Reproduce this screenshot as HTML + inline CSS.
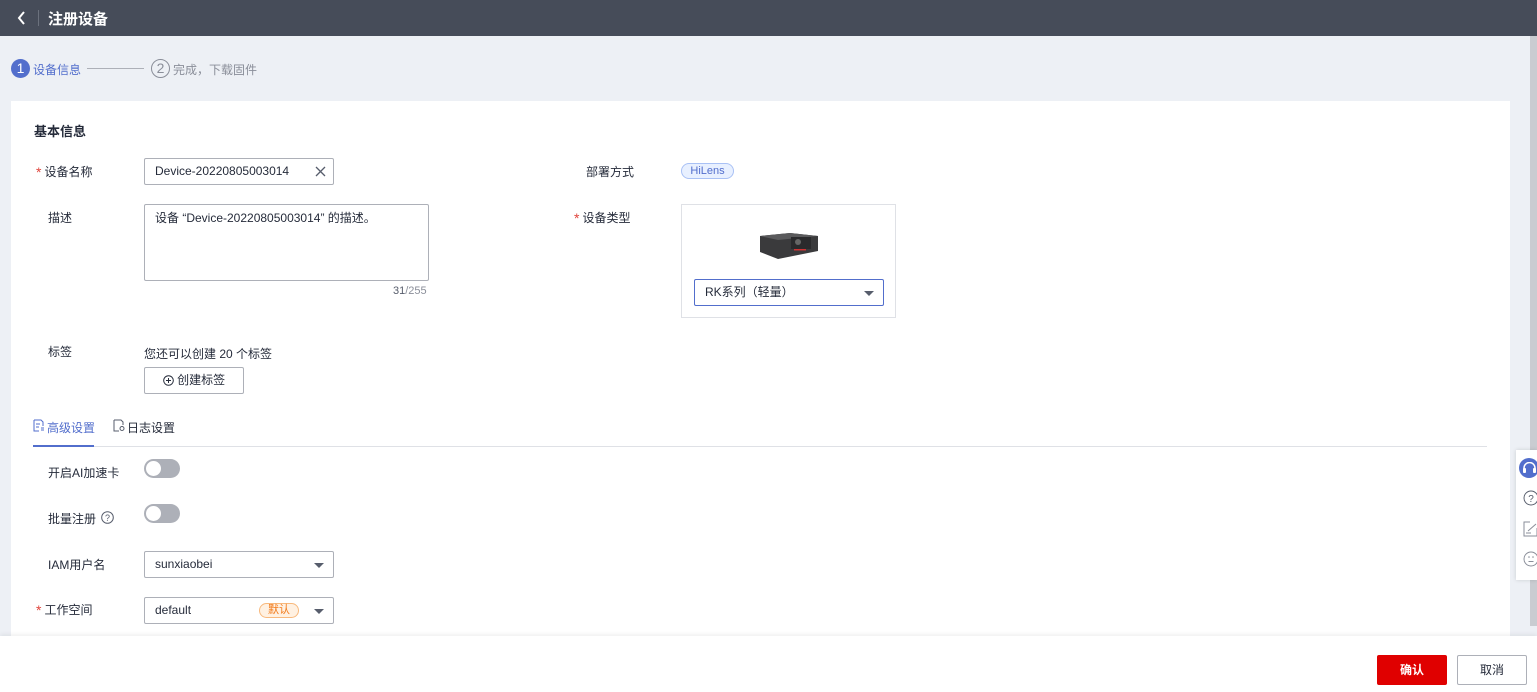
<!DOCTYPE html>
<html><head><meta charset="utf-8"><style>
*{box-sizing:border-box;margin:0;padding:0}
body{width:1537px;height:692px;overflow:hidden;background:#edf0f5;font-family:"Liberation Sans","Noto Sans CJK SC",sans-serif;font-size:12px;color:#252b3a;position:relative}
.abs{position:absolute}
.hdr{left:0;top:0;width:1537px;height:36px;background:#464c59;color:#fff}
.card{left:11px;top:101px;width:1499px;height:560px;background:#fff}
.lbl{font-size:12px;color:#252b3a}
.star{color:#e0443c;margin-right:3px;font-size:14px;vertical-align:-1px}
.inp{border:1px solid #adb0b8;border-radius:2px;background:#fff;height:27px;padding-left:10px;line-height:25px;color:#252b3a}
.tri{position:absolute;right:9px;top:11px;border-left:5px solid transparent;border-right:5px solid transparent;border-top:5px solid #575d6c}
.tog{width:36px;height:19px;border-radius:10px;background:#adb0b8}
.tog::after{content:"";position:absolute;left:2px;top:2px;width:15px;height:15px;border-radius:50%;background:#fff}
.foot{left:0;top:636px;width:1537px;height:56px;background:#fff;box-shadow:0 -2px 4px rgba(0,0,0,.06)}
</style></head><body>
<div class="abs hdr">
  <svg class="abs" style="left:17px;top:11px" width="10" height="14" viewBox="0 0 10 14"><path d="M7 1L2 7l5 6" fill="none" stroke="#fff" stroke-width="2"/></svg>
  <div class="abs" style="left:38px;top:10px;width:1px;height:16px;background:#6b717d"></div>
  <div class="abs" style="left:48px;top:8px;font-size:15px;font-weight:bold">注册设备</div>
</div>
<div class="abs" style="left:1530px;top:36px;width:7px;height:590px;background:#c9ccd1"></div>
<div class="abs" style="left:11px;top:59px;width:19px;height:19px;border-radius:50%;background:#526ecc;color:#fff;text-align:center;line-height:19px;font-size:14px">1</div>
<div class="abs" style="left:33px;top:61px;color:#526ecc">设备信息</div>
<div class="abs" style="left:87px;top:68px;width:57px;height:1px;background:#adb0b8"></div>
<div class="abs" style="left:151px;top:59px;width:19px;height:19px;border-radius:50%;border:1px solid #8a8e99;color:#8a8e99;text-align:center;line-height:17px;font-size:14px">2</div>
<div class="abs" style="left:173px;top:61px;color:#8a8e99">完成，下载固件</div>

<div class="abs card"></div>
<div class="abs" style="left:34px;top:121px;font-size:13px;font-weight:bold">基本信息</div>

<div class="abs lbl" style="left:36px;top:163px"><span class="star">*</span>设备名称</div>
<div class="abs inp" style="left:144px;top:158px;width:190px">Device-20220805003014
  <svg class="abs" style="right:7px;top:7px" width="11" height="11" viewBox="0 0 11 11"><path d="M1 1l9 9M10 1l-9 9" stroke="#575d6c" stroke-width="1.3"/></svg></div>

<div class="abs lbl" style="left:48px;top:209px">描述</div>
<div class="abs inp" style="left:144px;top:204px;width:285px;height:77px;line-height:16px;padding-top:5px">设备 “Device-20220805003014” 的描述。</div>
<div class="abs" style="left:393px;top:285px;font-size:11px;color:#575d6c">31<span style="color:#8a8e99">/255</span></div>

<div class="abs lbl" style="left:586px;top:163px">部署方式</div>
<div class="abs" style="left:681px;top:163px;width:53px;height:16px;border:1px solid #a9c1f5;background:#e8f0ff;border-radius:9px;color:#526ecc;font-size:11px;text-align:center;line-height:14px">HiLens</div>
<div class="abs lbl" style="left:574px;top:209px"><span class="star">*</span>设备类型</div>
<div class="abs" style="left:681px;top:204px;width:215px;height:114px;border:1px solid #dfe1e6"></div>
<svg class="abs" style="left:758px;top:228px" width="62" height="32" viewBox="0 0 62 32"><path d="M2 8l30-3 28 3v15l-40 8L2 24z" fill="#3a3a3c"/><path d="M2 8l30-3 28 3-40 4z" fill="#5a5a5c"/><rect x="33" y="9" width="20" height="12" fill="#2a2a2c"/><circle cx="40" cy="14" r="3" fill="#666"/><rect x="36" y="21" width="12" height="1.5" fill="#c33"/></svg>
<div class="abs inp" style="left:694px;top:279px;width:190px;border-color:#526ecc">RK系列（轻量）<span class="tri"></span></div>

<div class="abs lbl" style="left:48px;top:343px">标签</div>
<div class="abs" style="left:144px;top:345px">您还可以创建 20 个标签</div>
<div class="abs" style="left:144px;top:367px;width:100px;height:27px;border:1px solid #adb0b8;border-radius:2px;text-align:center;line-height:25px">
  <svg style="vertical-align:-2px" width="11" height="11" viewBox="0 0 11 11"><circle cx="5.5" cy="5.5" r="4.8" fill="none" stroke="#252b3a"/><path d="M5.5 3v5M3 5.5h5" stroke="#252b3a"/></svg> 创建标签</div>

<svg class="abs" style="left:33px;top:419px" width="12" height="13" viewBox="0 0 12 13"><path d="M1 1h7l2 2v4M1 1v11h5" fill="none" stroke="#526ecc"/><path d="M3 5h4M3 8h3M8 9h3M8 11h3" stroke="#526ecc"/></svg>
<div class="abs" style="left:47px;top:419px;color:#526ecc">高级设置</div>
<svg class="abs" style="left:113px;top:419px" width="12" height="13" viewBox="0 0 12 13"><path d="M1 1h7l2 2v3M1 1v11h5" fill="none" stroke="#575d6c"/><circle cx="9" cy="9.5" r="2" fill="none" stroke="#575d6c"/></svg>
<div class="abs" style="left:127px;top:419px;color:#252b3a">日志设置</div>
<div class="abs" style="left:33px;top:446px;width:1454px;height:1px;background:#dfe1e6"></div>
<div class="abs" style="left:33px;top:445px;width:61px;height:2px;background:#526ecc"></div>

<div class="abs lbl" style="left:48px;top:464px">开启AI加速卡</div>
<div class="abs tog" style="left:144px;top:459px"></div>
<div class="abs lbl" style="left:48px;top:510px">批量注册</div>
<svg class="abs" style="left:101px;top:511px" width="13" height="13" viewBox="0 0 13 13"><circle cx="6.5" cy="6.5" r="5.8" fill="none" stroke="#575d6c"/><text x="6.5" y="10" font-size="9" text-anchor="middle" fill="#575d6c" font-family="Liberation Sans">?</text></svg>
<div class="abs tog" style="left:144px;top:504px"></div>
<div class="abs lbl" style="left:48px;top:556px">IAM用户名</div>
<div class="abs inp" style="left:144px;top:551px;width:190px">sunxiaobei<span class="tri"></span></div>
<div class="abs lbl" style="left:36px;top:601px"><span class="star">*</span>工作空间</div>
<div class="abs inp" style="left:144px;top:597px;width:190px">default<span class="tri"></span>
  <span class="abs" style="left:114px;top:5px;width:40px;height:15px;border:1px solid #f8b97d;background:#fff1e2;border-radius:8px;color:#f27a1a;font-size:11px;line-height:13px;text-align:center">默认</span></div>

<div class="abs" style="left:1516px;top:450px;width:21px;height:130px;background:#fff;box-shadow:0 0 4px rgba(0,0,0,.15)"></div>
<div class="abs" style="left:1519px;top:458px;width:20px;height:20px;border-radius:50%;background:#526ecc"></div>
<svg class="abs" style="left:1522px;top:462px" width="15" height="12" viewBox="0 0 15 12"><path d="M2 8V6a5.5 5.5 0 0 1 11 0v2" fill="none" stroke="#fff" stroke-width="1.5"/><rect x="1" y="6" width="3" height="5" rx="1" fill="#fff"/><rect x="11" y="6" width="3" height="5" rx="1" fill="#fff"/></svg>
<svg class="abs" style="left:1522px;top:489px" width="15" height="80" viewBox="0 0 15 80"><circle cx="9" cy="9" r="7" fill="none" stroke="#575d6c"/><text x="9" y="13" font-size="10" text-anchor="middle" fill="#575d6c" font-family="Liberation Sans">?</text><path d="M8 33H2v14h13v-8" fill="none" stroke="#8a8e99"/><path d="M6 42l8-7M4 44h5" stroke="#8a8e99"/><circle cx="9" cy="70" r="7" fill="none" stroke="#8a8e99"/><circle cx="7" cy="68" r=".8" fill="#8a8e99"/><circle cx="11" cy="68" r=".8" fill="#8a8e99"/><path d="M6.5 72.5h5" stroke="#8a8e99"/></svg>

<div class="abs foot"></div>
<div class="abs" style="left:1377px;top:655px;width:70px;height:30px;background:#e00000;border-radius:2px;color:#fff;text-align:center;line-height:30px;font-weight:bold">确认</div>
<div class="abs" style="left:1457px;top:655px;width:70px;height:30px;border:1px solid #adb0b8;border-radius:2px;background:#fff;text-align:center;line-height:28px">取消</div>
</body></html>
